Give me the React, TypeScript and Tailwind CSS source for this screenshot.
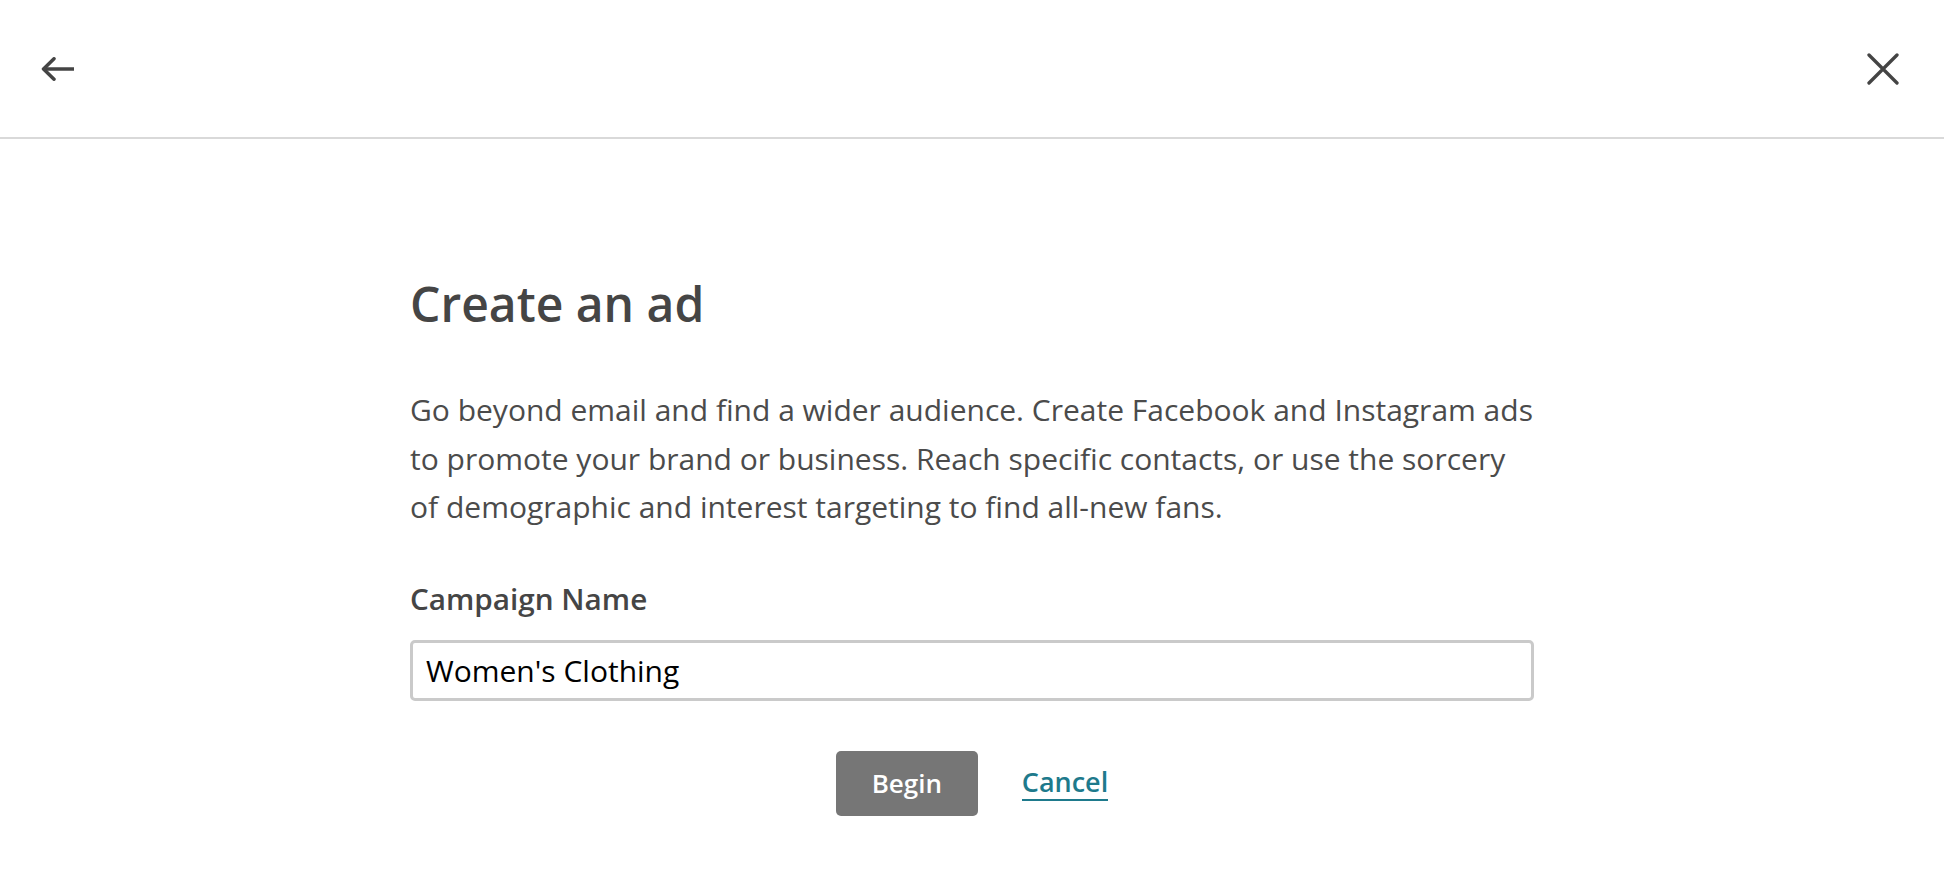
const font = { fontFamily: '"Open Sans", "Liberation Sans", sans-serif' };

function BackIcon() {
  return (
    <svg width="34" height="24" viewBox="0 0 34 24" fill="none" stroke="currentColor" strokeWidth="3.5">
      <path d="M2.5 12H33" />
      <path d="M13 1.8L2.5 12L13 22.2" strokeLinecap="round" strokeLinejoin="round" />
    </svg>
  );
}

function CloseIcon() {
  return (
    <svg width="32" height="32" viewBox="0 0 32 32" fill="none" stroke="currentColor" strokeWidth="3.3" strokeLinecap="round">
      <path d="M2 2L30 30M30 2L2 30" />
    </svg>
  );
}

function Header() {
  return (
    <header className="flex h-[139px] items-center justify-between border-b-2 border-[#d9d9d9] pl-[41px] pr-[45px] text-[#444]">
      <button className="flex items-center">
        <BackIcon />
      </button>
      <button className="flex items-center">
        <CloseIcon />
      </button>
    </header>
  );
}

export default function App() {
  return (
    <div className="min-h-screen bg-white" style={font}>
      <Header />
      <main className="mx-auto w-[1124px] pt-[134px]">
        <h1 className="text-[48px] font-semibold leading-[62px] text-[#454545]">
          Create an ad
        </h1>
        <p className="mt-[51px] text-[30px] leading-[48.5px] text-[#4b4b4b]">
          Go beyond email and find a wider audience. Create Facebook and Instagram ads
          <br />
          to promote your brand or business. Reach specific contacts, or use the sorcery
          <br />
          of demographic and interest targeting to find all-new fans.
        </p>
        <label className="mt-[47px] block text-[29.7px] font-semibold leading-[40px] text-[#454545]">
          Campaign Name
        </label>
        <input
          className="mt-[21px] block h-[61px] w-full rounded-[5px] border-[3px] border-[#cacaca] px-[13px] text-[30px] text-black outline-none"
          defaultValue="Women's Clothing"
        />
        <div className="mt-[50px] flex items-center justify-center gap-[44px]">
          <button className="h-[65px] w-[142px] rounded-[5px] bg-[#767676] text-[26px] font-semibold text-white">
            Begin
          </button>
          <a
            href="#"
            className="border-b-2 border-[#1e7a8c] text-[27px] font-semibold leading-[34px] text-[#1e7a8c]"
          >
            Cancel
          </a>
        </div>
      </main>
    </div>
  );
}
